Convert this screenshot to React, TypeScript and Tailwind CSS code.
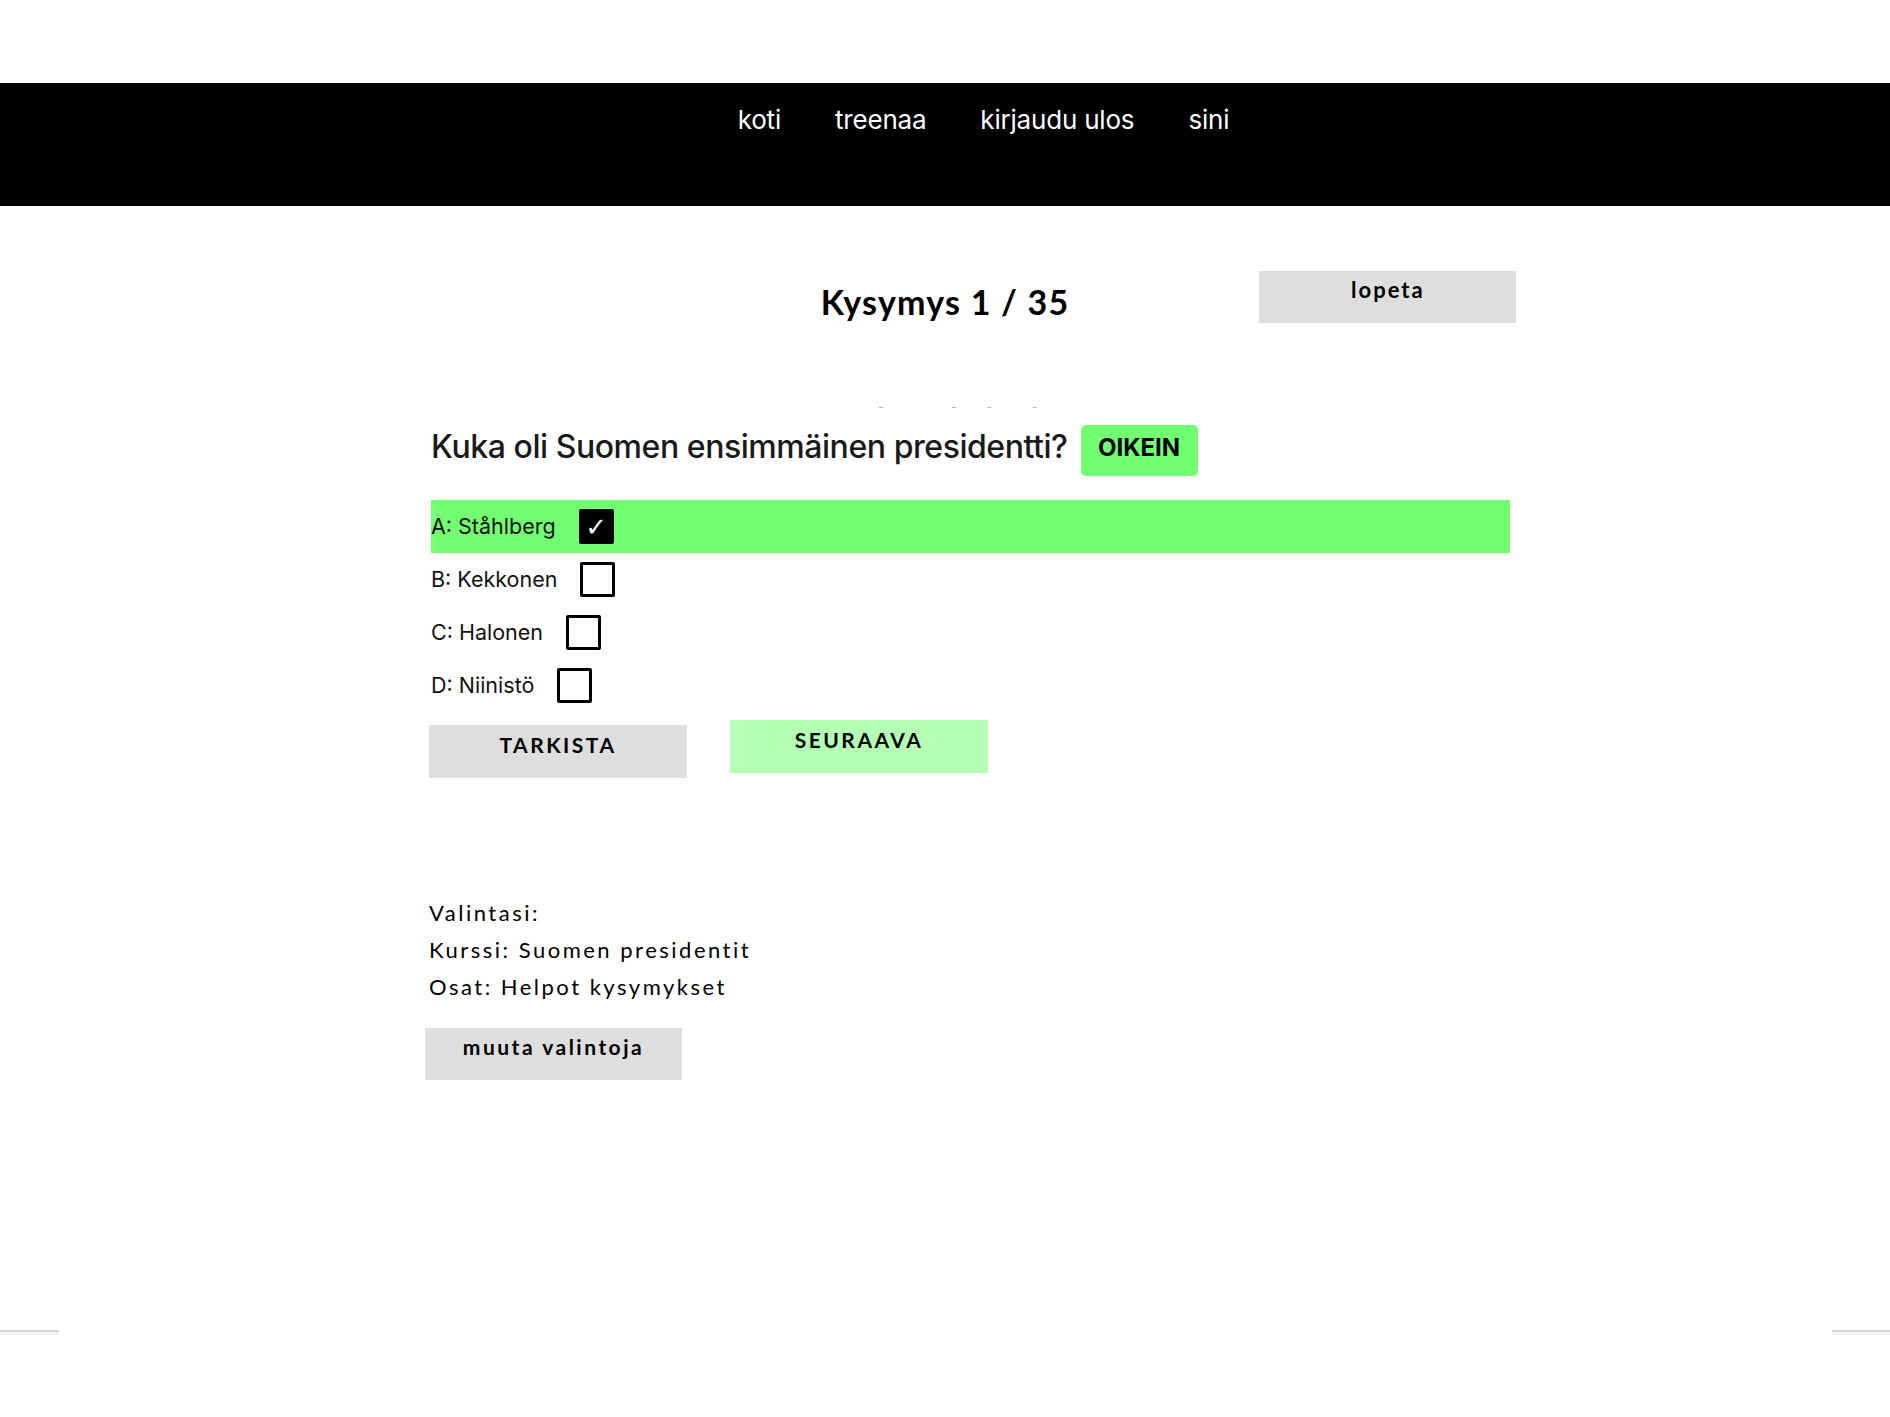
const answers = [
  { label: 'A: Ståhlberg', checked: true },
  { label: 'B: Kekkonen', checked: false },
  { label: 'C: Halonen', checked: false },
  { label: 'D: Niinistö', checked: false },
]

const navItems = ['koti', 'treenaa', 'kirjaudu ulos', 'sini']

const sans = "font-['Inter','Liberation_Sans',sans-serif]"
const geo = "font-['Lato','Noto_Sans',sans-serif]"

function Navbar() {
  return (
    <nav className="h-[123px] bg-black">
      <ul className={`flex justify-center gap-[54px] pl-[77px] pt-[21px] text-[26px] leading-[32px] tracking-[-0.2px] text-white ${sans}`}>
        {navItems.map((item) => (
          <li key={item}>{item}</li>
        ))}
      </ul>
    </nav>
  )
}

function AnswerRow({ label, checked }: { label: string; checked: boolean }) {
  return (
    <div className={`flex h-[53px] w-[1079px] items-center ${checked ? 'bg-[#72ff72]' : ''}`}>
      <span className={`text-[21.5px] text-[#111] ${sans}`}>{label}</span>
      <span
        className={`ml-[23px] flex h-[35px] w-[35px] items-center justify-center rounded-[2px] border-[3px] border-black ${
          checked ? 'bg-black' : 'bg-white'
        }`}
      >
        {checked && (
          <span className="font-['DejaVu_Sans',sans-serif] text-[26px] leading-none font-bold text-white">✓</span>
        )}
      </span>
    </div>
  )
}

export default function App() {
  return (
    <div className="min-h-[1417px] bg-white pt-[83px]">
      <Navbar />

      {/* question header */}
      <div className="mt-[65px] flex items-start">
        <div className="flex-1" />
        <h2 className={`mt-[11px] text-[34px] font-bold leading-[40px] tracking-[1.2px] text-black ${geo}`}>
          Kysymys 1 / 35
        </h2>
        <div className="flex-1">
          <button
            className={`ml-[190px] h-[52px] w-[257px] bg-[#dedede] pb-[16px] text-[22px] font-bold tracking-[2px] text-black ${geo}`}
          >
            lopeta
          </button>
        </div>
      </div>

      <div className="ml-[429px]">
        {/* faint progress marks */}
        <div className="mt-[84px] flex h-[1px]">
          <span className="ml-[450px] h-[1px] w-[4px] bg-[#bbb]" />
          <span className="ml-[69px] h-[1px] w-[4px] bg-[#bbb]" />
          <span className="ml-[31px] h-[1px] w-[4px] bg-[#bbb]" />
          <span className="ml-[42px] h-[1px] w-[4px] bg-[#bbb]" />
        </div>

        <div className="ml-[2px] mt-[15px] flex items-center gap-[13px]">
          <h1 className={`mb-[6px] text-[32px] font-medium tracking-[-0.45px] text-[#1a1a1a] ${sans}`}>
            Kuka oli Suomen ensimmäinen presidentti?
          </h1>
          <span
            className={`flex h-[51px] w-[117px] items-center justify-center rounded-[5px] bg-[#72ff72] pb-[4px] text-[24px] font-bold text-black ${sans}`}
          >
            OIKEIN
          </span>
        </div>

        <div className="ml-[2px] mt-[23px] flex flex-col">
          {answers.map((a) => (
            <AnswerRow key={a.label} label={a.label} checked={a.checked} />
          ))}
        </div>

        <div className="mt-[8px] flex items-start gap-[43px]">
          <button
            className={`mt-[5px] h-[53px] w-[258px] bg-[#dedede] pb-[14px] text-[21px] font-bold tracking-[2.5px] text-black ${geo}`}
          >
            TARKISTA
          </button>
          <button
            className={`h-[53px] w-[258px] bg-[#b3ffb3] pb-[14px] text-[21px] font-bold tracking-[2.5px] text-black ${geo}`}
          >
            SEURAAVA
          </button>
        </div>

        <div className={`mt-[116px] text-[22px] leading-[37px] tracking-[2.5px] text-black ${geo}`}>
          <p>Valintasi:</p>
          <p>Kurssi: Suomen presidentit</p>
          <p>Osat: Helpot kysymykset</p>
        </div>

        <button
          className={`-ml-[4px] mt-[23px] h-[52px] w-[257px] bg-[#dedede] pb-[14px] text-[21px] font-bold tracking-[2.5px] text-black ${geo}`}
        >
          muuta valintoja
        </button>
      </div>

      <div className="mt-[250px] flex justify-between">
        <div className="w-[59px]">
          <div className="h-[2px] bg-[#d4d4d4]" />
          <div className="h-[3px] bg-[#f3f3f3]" />
        </div>
        <div className="w-[58px]">
          <div className="h-[2px] bg-[#d4d4d4]" />
          <div className="h-[3px] bg-[#f3f3f3]" />
        </div>
      </div>
    </div>
  )
}
